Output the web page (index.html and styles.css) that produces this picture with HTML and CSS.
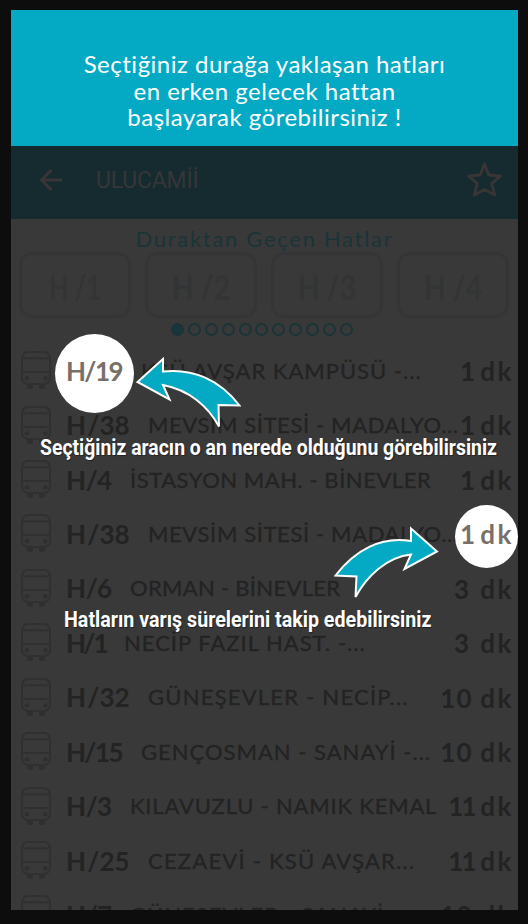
FILE: index.html
```html
<!DOCTYPE html>
<html lang="tr">
<head>
<meta charset="utf-8">
<title>Ulucamii</title>
<link rel="stylesheet" href="styles.css">
</head>
<body>
<svg class="defs" width="0" height="0" aria-hidden="true">
  <symbol id="bus" viewBox="0 0 30 38">
    <rect x="1" y="1" width="28" height="32" rx="6"/>
    <path d="M1 7.2H29M1 21H29"/>
    <g class="solid"><circle cx="6" cy="27.2" r="2.3"/><circle cx="24.3" cy="27.2" r="2.3"/>
    <path d="M6 34H12V36Q12 38 9 38Q6 38 6 36ZM18 34H24V36Q24 38 21 38Q18 38 18 36Z"/></g>
  </symbol>
</svg>
<div class="screen">
  <div class="banner"><p>Seçtiğiniz durağa yaklaşan hatları</p><p>en erken gelecek hattan</p><p>başlayarak görebilirsiniz !</p></div>
  <header class="bar">
    <svg class="back" viewBox="0 0 24 24"><path d="M23 12H3M12.5 2L2.5 12L12.5 22"/></svg>
    <h1>ULUCAMİİ</h1>
    <svg class="star" viewBox="0 0 36 36"><path d="M18 2L22.3 13L34 14L25.2 21.6L28.2 33L18 27.4L7.8 33L10.8 21.6L2 14L13.7 13Z"/></svg>
  </header>
  <section class="lines">
    <h2>Duraktan Geçen Hatlar</h2>
    <div class="chips"><div><span class="one">H /1</span></div><div><span>H /2</span></div><div><span>H /3</span></div><div><span>H /4</span></div></div>
    <div class="dots"><i class="on"></i><i></i><i></i><i></i><i></i><i></i><i></i><i></i><i></i><i></i><i></i></div>
  </section>
  <main class="list">
    <div class="row"><svg class="bus"><use href="#bus"/></svg><b class="code w3 spot big">H /19</b><span class="name n1">KSÜ AVŞAR KAMPÜSÜ -...</span><b class="time t1">1 dk</b></div>
    <div class="row"><svg class="bus"><use href="#bus"/></svg><b class="code w4">H /38</b><span class="name n2">MEVSİM SİTESİ - MADALYO...</span><b class="time t1">1 dk</b></div>
    <div class="row"><svg class="bus"><use href="#bus"/></svg><b class="code w2">H /4</b><span class="name n3">İSTASYON MAH. - BİNEVLER</span><b class="time t1">1 dk</b></div>
    <div class="row"><svg class="bus"><use href="#bus"/></svg><b class="code w4">H /38</b><span class="name n2">MEVSİM SİTESİ - MADALYO...</span><b class="time t1 spot small">1 dk</b></div>
    <div class="row"><svg class="bus"><use href="#bus"/></svg><b class="code w2">H /6</b><span class="name n5">ORMAN - BİNEVLER</span><b class="time t3">3 dk</b></div>
    <div class="row"><svg class="bus"><use href="#bus"/></svg><b class="code w1">H /1</b><span class="name n6">NECİP FAZIL HAST. -...</span><b class="time t3">3 dk</b></div>
    <div class="row"><svg class="bus"><use href="#bus"/></svg><b class="code w4">H /32</b><span class="name n7">GÜNEŞEVLER - NECİP...</span><b class="time t10"><span>10</span> dk</b></div>
    <div class="row"><svg class="bus"><use href="#bus"/></svg><b class="code w3">H /15</b><span class="name n8">GENÇOSMAN - SANAYİ -...</span><b class="time t10"><span>10</span> dk</b></div>
    <div class="row"><svg class="bus"><use href="#bus"/></svg><b class="code w2">H /3</b><span class="name n9">KILAVUZLU - NAMIK KEMAL</span><b class="time t11"><span>11</span> dk</b></div>
    <div class="row"><svg class="bus"><use href="#bus"/></svg><b class="code w4">H /25</b><span class="name n10">CEZAEVİ - KSÜ AVŞAR...</span><b class="time t11"><span>11</span> dk</b></div>
    <div class="row"><svg class="bus"><use href="#bus"/></svg><b class="code w2">H /7</b><span class="name n11">GÜNEŞEVLER - SANAYİ</span><b class="time t10"><span>12</span> dk</b></div>
  </main>
  <svg class="arrow arrow-left" viewBox="0 0 106 72"><path d="M2.5 25L28 2V14.5C58 11 85 23 104.500 48.500L83.500 48L84 69.500C73 49 54 33 28 28L34.500 42.500Z"/></svg>
  <svg class="arrow arrow-right" viewBox="0 0 106 72"><path d="M103 25.500L77 2.500V15C47 10 21 24 1.500 49.500L22.500 50.500L21.500 71C33 50 53 31 77 28.500L70.500 43Z"/></svg>
  <p class="tip tip-line">Seçtiğiniz aracın o an nerede olduğunu görebilirsiniz</p>
  <p class="tip tip-time">Hatların varış sürelerini takip edebilirsiniz</p>
</div>
</body>
</html>
```
FILE: styles.css
```css
* { box-sizing: border-box; }
body { margin: 0; background: #0d0d0d; font-family: Lato, "Liberation Sans", sans-serif; }
p, h1, h2 { margin: 0; }
.defs { position: absolute; }
.screen { position: relative; width: 507px; height: 900px; margin: 10px 0 0 11px; background: #393939; overflow: hidden; }
.banner { height: 136px; padding-top: 41px; background: #04a9c4; color: #fff; text-align: center; font-size: 24px; line-height: 26.700px; letter-spacing: .5px; white-space: nowrap; }
.bar { height: 73px; display: flex; align-items: center; background: #152b2f; padding: 0 15px 6px 28px; }
.bar svg, .bus { fill: none; stroke: #393536; }
.back { width: 24px; height: 24px; stroke-width: 3; }
.bar h1 { flex: 1; margin-left: 33px; padding-top: 2px; color: #353638; font: 400 23px Roboto, sans-serif; letter-spacing: -.2px; }
.star { width: 37px; height: 36px; stroke-width: 2.8; stroke-linejoin: round; }
.lines { height: 124px; padding-top: 6px; }
.lines h2 { height: 27px; color: #1a3438; font-size: 22px; line-height: 27px; font-weight: 400; letter-spacing: 1.7px; text-align: center; }
.chips { display: flex; gap: 14px; padding-left: 8px; }
.chips div { flex: 0 0 112px; height: 66px; border: 3px solid #343536; border-radius: 13px; color: #333435; font-size: 34px; font-weight: 700; line-height: 63px; text-align: center; white-space: nowrap; }
.chips span { display: inline-block; transform: scaleX(.83); }
.chips .one { transform: scaleX(.74); }
.dots { display: flex; gap: 3.900px; margin: 5px 0 0 160px; }
.dots i { width: 13px; height: 13px; border: 2px solid #1a3438; border-radius: 50%; }
.dots .on { background: #17373c; }
.row { position: relative; display: flex; align-items: center; height: 54.430px; padding: 0 5px 0 10px; color: #232323; white-space: nowrap; }
.bus { width: 30px; height: 38px; flex: none; stroke: #303030; stroke-width: 2; }
.solid { fill: #2f2f2f; stroke: none; }
.code { position: relative; flex: none; margin-left: 15px; padding-top: 1px; font-size: 26px; word-spacing: -5px; }
.w1 { width: 58px; letter-spacing: -2px; }
.w2 { width: 64px; letter-spacing: -.8px; }
.w3 { width: 75px; letter-spacing: -1.5px; }
.w4 { width: 82px; }
.name { flex: none; font-size: 22px; -webkit-text-stroke: .35px currentColor; }
.n1, .n6, .n8 { letter-spacing: 1px; }
.n2 { letter-spacing: .62px; }
.n3 { letter-spacing: .54px; }
.n5 { letter-spacing: .3px; }
.n7, .n10 { letter-spacing: 1.220px; }
.n9 { letter-spacing: .8px; }
.n11 { letter-spacing: 1px; }
.time { position: absolute; right: 4px; top: 12px; line-height: 32px; font-size: 26px; letter-spacing: 2.500px; }
.t1 { word-spacing: -6px; }
.t3 { word-spacing: 0; }
.t10 { word-spacing: -1px; }
.t10 span { letter-spacing: 1px; }
.t11 { word-spacing: -3px; }
.t11 span { letter-spacing: -2px; }
.spot { color: #787068; z-index: 1; }
.spot::before { content: ""; position: absolute; z-index: -1; border-radius: 50%; background: #fff; }
.big::before { width: 79px; height: 79px; left: -11px; top: -20px; }
.small::before { width: 63px; height: 63px; right: -4px; top: -13px; }
.arrow { position: absolute; z-index: 2; width: 106px; height: 72px; fill: #04a9c4; stroke: #fff; stroke-width: 2; }
.arrow-left { left: 124px; top: 347px; }
.arrow-right { left: 323px; top: 516px; }
.tip { position: absolute; z-index: 3; color: #fff; font: 700 22px/26px Roboto, sans-serif; white-space: nowrap; transform-origin: 0 0; text-shadow: 1px 1px 1px #222; }
.tip-line { left: 29px; top: 425px; transform: scaleX(.882); }
.tip-time { left: 53px; top: 597px; transform: scaleX(.893); }
```
